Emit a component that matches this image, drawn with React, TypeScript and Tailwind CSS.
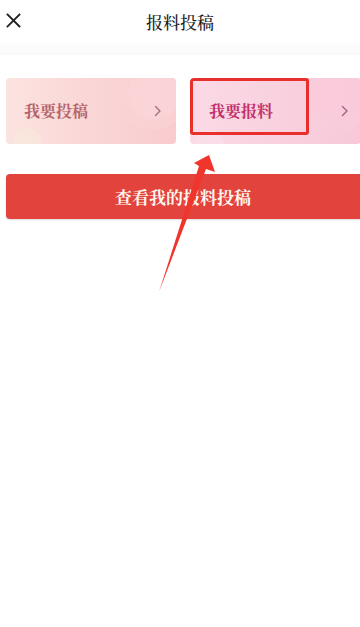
import React from "react"

const font = {
    fontFamily: '"Noto Serif CJK SC", "Noto Sans CJK SC", "Noto Sans", sans-serif',
}

const Chevron = ({ color }: { color: string }) => (
    <svg width="8" height="12" viewBox="0 0 8 12" fill="none">
        <path d="M1.5 1.5 L6 6 L1.5 10.5" stroke={color} strokeWidth="1.4" strokeLinecap="round" strokeLinejoin="round" />
    </svg>
)

const App = () => {
    return (
        <main className="relative h-[627px] w-[360px] overflow-hidden bg-white" style={font}>
            {/*   Header   */}
            <header className="relative flex h-[43px] items-center justify-center">
                <button className="absolute left-[6px] top-[13px] p-0">
                    <svg width="15" height="15" viewBox="0 0 15 15" fill="none">
                        <path d="M1.5 1.5 L13.5 13.5 M13.5 1.5 L1.5 13.5" stroke="#222" strokeWidth="1.8" strokeLinecap="square" />
                    </svg>
                </button>
                <h1 className="text-[17px] font-medium leading-none text-[#1c1c1c]">报料投稿</h1>
            </header>
            <div className="h-[12px] bg-gradient-to-b from-[#fdfdfd] to-[#f9f9f9]" />

            {/*   Cards   */}
            <section className="mt-[23px] flex gap-[14px] pl-[6px]">
                <div className="relative flex h-[66px] w-[170px] shrink-0 items-center justify-between overflow-hidden rounded-[4px] bg-gradient-to-r from-[#fbe3e1] via-[#fad6d6] to-[#f9cbcf] pl-[18px] pr-[14px]">
                    <div className="absolute -right-[14px] -top-[22px] h-[74px] w-[74px] rounded-full bg-[#fad3d6]/50" />
                    <div className="absolute -right-[4px] -top-[10px] h-[52px] w-[52px] rounded-full bg-[#fad5d8]/60" />
                    <div className="absolute -bottom-[14px] left-[6px] h-[30px] w-[30px] rounded-full bg-[#f9e9dc]/60" />
                    <span className="relative text-[16px] font-bold text-[#b4646c]">我要投稿</span>
                    <span className="relative"><Chevron color="#a5707a" /></span>
                </div>
                <div className="relative flex h-[66px] w-[171px] shrink-0 items-center justify-between overflow-hidden rounded-[4px] bg-gradient-to-r from-[#fbdae6] via-[#f9d1df] to-[#f8c8d9] pl-[19px] pr-[12px]">
                    <div className="absolute -right-[12px] -top-[20px] h-[74px] w-[74px] rounded-full bg-[#f9cddd]/50" />
                    <div className="absolute -right-[2px] -top-[8px] h-[52px] w-[52px] rounded-full bg-[#f8cadb]/60" />
                    <div className="absolute -bottom-[16px] left-[4px] h-[30px] w-[30px] rounded-full bg-[#f8e0ea]/70" />
                    <span className="relative text-[16px] font-bold text-[#c2316b]">我要报料</span>
                    <span className="relative"><Chevron color="#a4607c" /></span>
                    <div className="absolute left-0 top-0 h-[57px] w-[119px] rounded-[3px] border-[3px] border-[#e82f2b]" />
                </div>
            </section>

            {/*   Button   */}
            <div className="mt-[30px] pl-[6px]">
                <button className="flex h-[45px] w-[360px] items-center justify-center rounded-[4px] bg-[#e2433c] shadow-[0_1px_2px_rgba(0,0,0,0.15)]">
                    <span className="pr-[6px] text-[17px] font-bold text-[#fff8f0]">查看我的报料投稿</span>
                </button>
            </div>

            {/*   Annotation arrow   */}
            <svg className="absolute left-0 top-0" width="360" height="627" viewBox="0 0 360 627">
                <polygon points="209,155 215,172 206,169 159,292 199,166 194,163" fill="#f0362c" />
            </svg>
        </main>
    )
}

export default App
